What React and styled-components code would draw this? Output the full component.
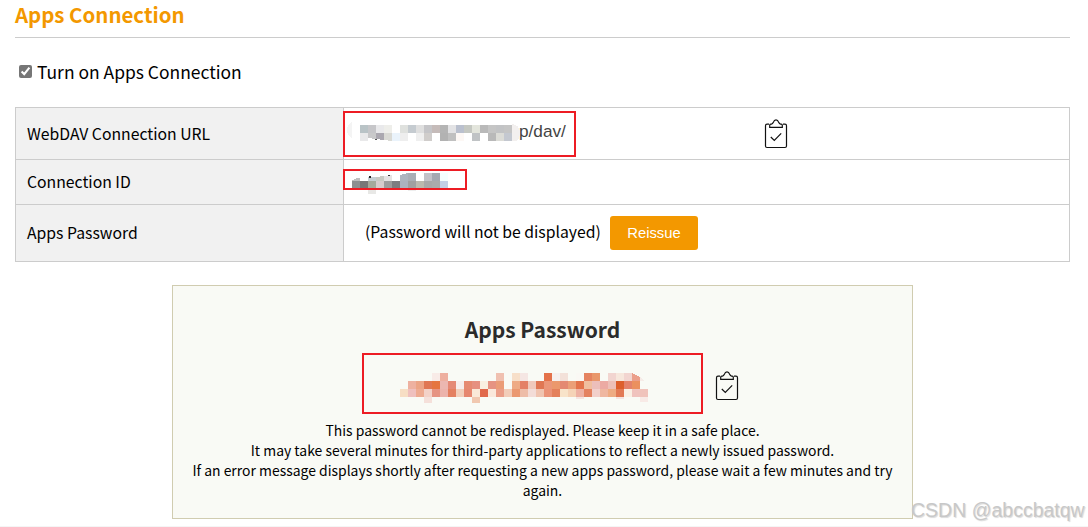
import React, { useState } from "react";
import styled, { createGlobalStyle } from "styled-components";

const GlobalStyle = createGlobalStyle`
  * {
    box-sizing: border-box;
  }

  body {
    margin: 0;
    background-color: #fff;
    color: #000;
    font-family: "Noto Sans CJK JP", "Noto Sans", sans-serif;
    font-size: 15.75px;
    overflow: hidden;
  }
`;

const Page = styled.div`
  position: relative;
  height: 527px;
  padding: 0 18px 0 15px;
  border-bottom: 1px solid #f5f5f5;
  overflow: hidden;
`;

const Title = styled.h1`
  height: 38px;
  margin: 0;
  border-bottom: 1px solid #ccc;
  color: #f39800;
  font-size: 20.45px;
  font-weight: 700;
  line-height: 29px;
`;

const ToggleLabel = styled.label`
  display: flex;
  align-items: center;
  height: 69px;
  padding: 0 0 3px 4px;
  font-size: 17.45px;
`;

const Checkbox = styled.input`
  width: 13px;
  height: 13px;
  margin: 0 5px 0 0;
  accent-color: #767676;
`;

const Table = styled.div`
  border: 1px solid #ccc;
  border-bottom: none;
`;

const Row = styled.div`
  display: flex;
  height: ${(props) => props.$height}px;
  border-bottom: 1px solid #ccc;
`;

const HeadCell = styled.div`
  display: flex;
  align-items: center;
  width: 328px;
  padding: 0 0 1px 11px;
  border-right: 1px solid #ccc;
  background-color: #f1f1f1;
  line-height: 23px;
`;

const DataCell = styled.div`
  display: flex;
  align-items: center;
  flex: 1;
  isolation: isolate;
`;

const Frame = styled.div`
  display: flex;
  flex-shrink: 0;
  width: ${(props) => props.$width}px;
  height: ${(props) => props.$height}px;
  margin-left: ${(props) => props.$left || 0}px;
  margin-top: ${(props) => props.$top || 0}px;
  border: 2px solid #ed1c24;
`;

const UrlText = styled.span`
  margin-left: -1px;
  color: #444;
  font-family: "Liberation Sans", Arial, sans-serif;
  font-size: 17.2px;
  line-height: 37px;
`;

const Note = styled.span`
  width: 236px;
  margin-left: 21px;
  padding-bottom: 3px;
  white-space: nowrap;
`;

const ReissueButton = styled.button`
  width: 88px;
  height: 34px;
  margin-left: 9px;
  padding: 0;
  border: none;
  border-radius: 3px;
  background-color: #f39800;
  color: #fff;
  font-family: "Liberation Sans", Arial, sans-serif;
  font-size: 14.8px;
  cursor: pointer;
`;

const CopyButton = styled.button`
  display: flex;
  width: 24px;
  height: 30px;
  margin-top: ${(props) => props.$top || 0}px;
  margin-left: ${(props) => props.$left}px;
  padding: 0;
  border: none;
  background: none;
  cursor: pointer;
`;

const PasswordPanel = styled.section`
  width: 741px;
  height: 234px;
  margin: 23px 0 0 157px;
  padding: 26px 15px 0;
  border: 1px solid #d0ccb0;
  background-color: #f9faf5;
  text-align: center;
`;

const PanelTitle = styled.h2`
  height: 41px;
  margin: 0;
  color: #2b2b2b;
  font-size: 21px;
  font-weight: 700;
  line-height: 34px;
`;

const PasswordRow = styled.div`
  display: flex;
  align-items: center;
  margin-left: 174px;
`;

const PanelText = styled.p`
  margin: 6px 0 0;
  font-size: 13.95px;
  line-height: 20px;
`;

const Watermark = styled.div`
  position: absolute;
  top: 498px;
  left: 911px;
  color: #c8c8c8;
  font-family: "Liberation Sans", Arial, sans-serif;
  font-size: 19.5px;
  line-height: 24px;
  text-shadow: 1px 1px 1px rgba(0, 0, 0, 0.15);
  white-space: nowrap;
`;

const Drawing = styled.svg`
  display: block;
  flex-shrink: 0;
  overflow: visible;
`;

// one string per line of 8px cells, "-" leaves the cell clear
const urlCells = [
  "b9c3c6 c6c6c9 e9e9eb eeeeea - dfe1de c5cbd0 dfdfdf c5c5c8 c5bbb9 b4b4b4 e3e3e5 bac0ce c5c8c2 e3e5dc b9b9b9 c5c5c5 c2c3c5 c5c5c5",
  "e9e9ea c9c9ca aba8b0 dadad5 eaf3fb eeeeee - efefef d0cdcb - b2b2b2 c0c0c0 fdf8f5 - c0c3c5 - b9b9b9 dcdcd7 c4c8d0",
];

const idCells = [
  "- - - - - - aeb5bf a9aeb5 - c3c2c8 a6a9b1 f5fefe",
  "8d8f90 777777 a4a99b d5cccc 9c9c9c 7d7d80 acb3bf a0a0a1 bbb9af a8a8a9 aaabac c3d0e6",
];

const passwordCells = [
  "- - - - f8ebe7 eeaf9f - - - - - - f0c0b0 - f7dfc9 f5e6e3 - - e4724a f5f0ee f3e1d9 - faf8f4 e58360 e9976b - f2d5d0 f7e7dc f2d5d0",
  "- eeb1a0 eca485 e07753 e5753f ecb7b0 e58975 f6eeec e68a71 e69080 f9efe0 e69382 eb9c77 - eeab85 e48066 f0c9bb e07753 eb9678 eb986c e48972 eb9f77 e4744b f0bf9f ecbfba ecaaa3 edbfb7 dd5f2c e4826b eb905f",
  "f7dec4 efc0be eeab91 f3d2c8 e69483 ecb3ab e48060 f2cfbb e6876f fae9d8 e1694b fae8db eb9e88 f2cdb9 eb9870 eebda8 f3dcd7 f0c4b0 eb9377 e4805b f8e3c9 f5d3b7 eeb1a3 e48260 f2d0cb efb7a0 eeab82 e27a55 faf0e4 f0c3be f0c3bb",
];

const Mosaic = ({ rows, width, height, children }) => (
  <Drawing width={width} height={height} shapeRendering="crispEdges">
    {rows.map((row, y) =>
      row.split(" ").map((color, x) =>
        color === "-" ? null : (
          <rect key={`${x}-${y}`} x={x * 8} y={y * 8} width="8" height="8" fill={`#${color}`} />
        )
      )
    )}
    {children}
  </Drawing>
);

const MosaicSlot = styled.div`
  position: relative;
  z-index: ${(props) => (props.$under ? -1 : 0)};
  margin: ${(props) => props.$top}px 0 0 ${(props) => props.$left}px;
`;

const ClipboardIcon = () => (
  <Drawing width="24" height="30" viewBox="0 0 24 30" fill="none" stroke="#111" strokeWidth="1.2">
    <path d="M5 5.2H3Q1.5 5.2 1.5 6.7V27Q1.5 28.5 3 28.5H21Q22.5 28.5 22.5 27V6.7Q22.5 5.2 21 5.2H19" />
    <path d="M5.7 8.4V6.2Q5.7 5.2 6.7 5.2H7.5Q8.6 5 9.2 3.6Q10.2 0.9 12 0.9Q13.8 0.9 14.8 3.6Q15.4 5 16.5 5.2H17.3Q18.3 5.2 18.3 6.2V8.4Z" />
    <path d="M6.8 18L10.3 21.5L17.2 14.3" />
  </Drawing>
);

const App = () => {
  const [enabled, setEnabled] = useState(true);

  return (
    <Page>
      <GlobalStyle />
      <Title>Apps Connection</Title>
      <ToggleLabel>
        <Checkbox type="checkbox" checked={enabled} onChange={(e) => setEnabled(e.target.checked)} />
        Turn on Apps Connection
      </ToggleLabel>

      <Table>
        <Row $height={52}>
          <HeadCell>WebDAV Connection URL</HeadCell>
          <DataCell>
            <Frame $width={233} $height={46} $left={-1}>
              <MosaicSlot $left={15} $top={12}>
                <Mosaic rows={urlCells} width={160} height={16}>
                  <path d="M-8 -3Q-13 -1 -13 5Q-13 11 -8 13Z" fill="#f4f4f4" />
                  <path d="M152 -1Q159 0 160 6Q160 13 157 16H152Z" fill="#f3f0ef" />
                  <path d="M8 13L32 16H8Z" fill="#fff" />
                  <rect x="15" y="14" width="2" height="1" fill="#555" />
                </Mosaic>
              </MosaicSlot>
              <UrlText>p/dav/</UrlText>
            </Frame>
            <CopyButton $left={188}>
              <ClipboardIcon />
            </CopyButton>
          </DataCell>
        </Row>
        <Row $height={45}>
          <HeadCell>Connection ID</HeadCell>
          <DataCell>
            <Frame $width={124} $height={21} $left={-1} $top={-5}>
              <MosaicSlot $left={7} $top={2} $under>
                <Mosaic rows={idCells} width={96} height={16}>
                  <path d="M0 8Q2 5 8 5V8Z" fill="#bfbfbf" />
                  <path d="M16 4L24 4V8H16Z" fill="#c5ced3" />
                  <path d="M24 4L32 3V8H24Z" fill="#c8cac3" />
                  <path d="M32 3L40 2V8H32Z" fill="#e5e3e3" />
                  <rect x="17" y="3" width="2" height="2" fill="#222" />
                  <rect x="36" y="2" width="2" height="1" fill="#333" />
                  <path d="M48 2L56 0H48Z" fill="#fff" />
                  <rect x="16" y="16" width="8" height="5" fill="#e8e8e6" />
                  <rect x="56" y="16" width="8" height="2" fill="#eeeeee" />
                </Mosaic>
              </MosaicSlot>
            </Frame>
          </DataCell>
        </Row>
        <Row $height={57}>
          <HeadCell>Apps Password</HeadCell>
          <DataCell>
            <Note>(Password will not be displayed)</Note>
            <ReissueButton>Reissue</ReissueButton>
          </DataCell>
        </Row>
      </Table>

      <PasswordPanel>
        <PanelTitle>Apps Password</PanelTitle>
        <PasswordRow>
          <Frame $width={341} $height={61}>
            <MosaicSlot $left={36} $top={18}>
              <Mosaic rows={passwordCells} width={248} height={30}>
                <path d="M232 0L240 4V8H232Z" fill="#eb9f8b" />
                <path d="M240 4L245 8H240Z" fill="#f6ece8" />
                <rect x="24" y="24" width="8" height="6" fill="#f5e0da" />
                <rect x="72" y="24" width="8" height="6" fill="#f1c8b0" />
                <rect x="176" y="24" width="8" height="2" fill="#f5e4e0" />
                <rect x="216" y="24" width="8" height="2" fill="#f5e4e0" />
                <rect x="240" y="24" width="8" height="5" fill="#f8eae6" />
              </Mosaic>
            </MosaicSlot>
          </Frame>
          <CopyButton $left={12} $top={5}>
            <ClipboardIcon />
          </CopyButton>
        </PasswordRow>
        <PanelText>
          This password cannot be redisplayed. Please keep it in a safe place.
          <br />
          It may take several minutes for third-party applications to reflect a newly issued password.
          <br />
          If an error message displays shortly after requesting a new apps password, please wait a few minutes and try
          again.
        </PanelText>
      </PasswordPanel>
      <Watermark>CSDN @abccbatqw</Watermark>
    </Page>
  );
};

export default App;
